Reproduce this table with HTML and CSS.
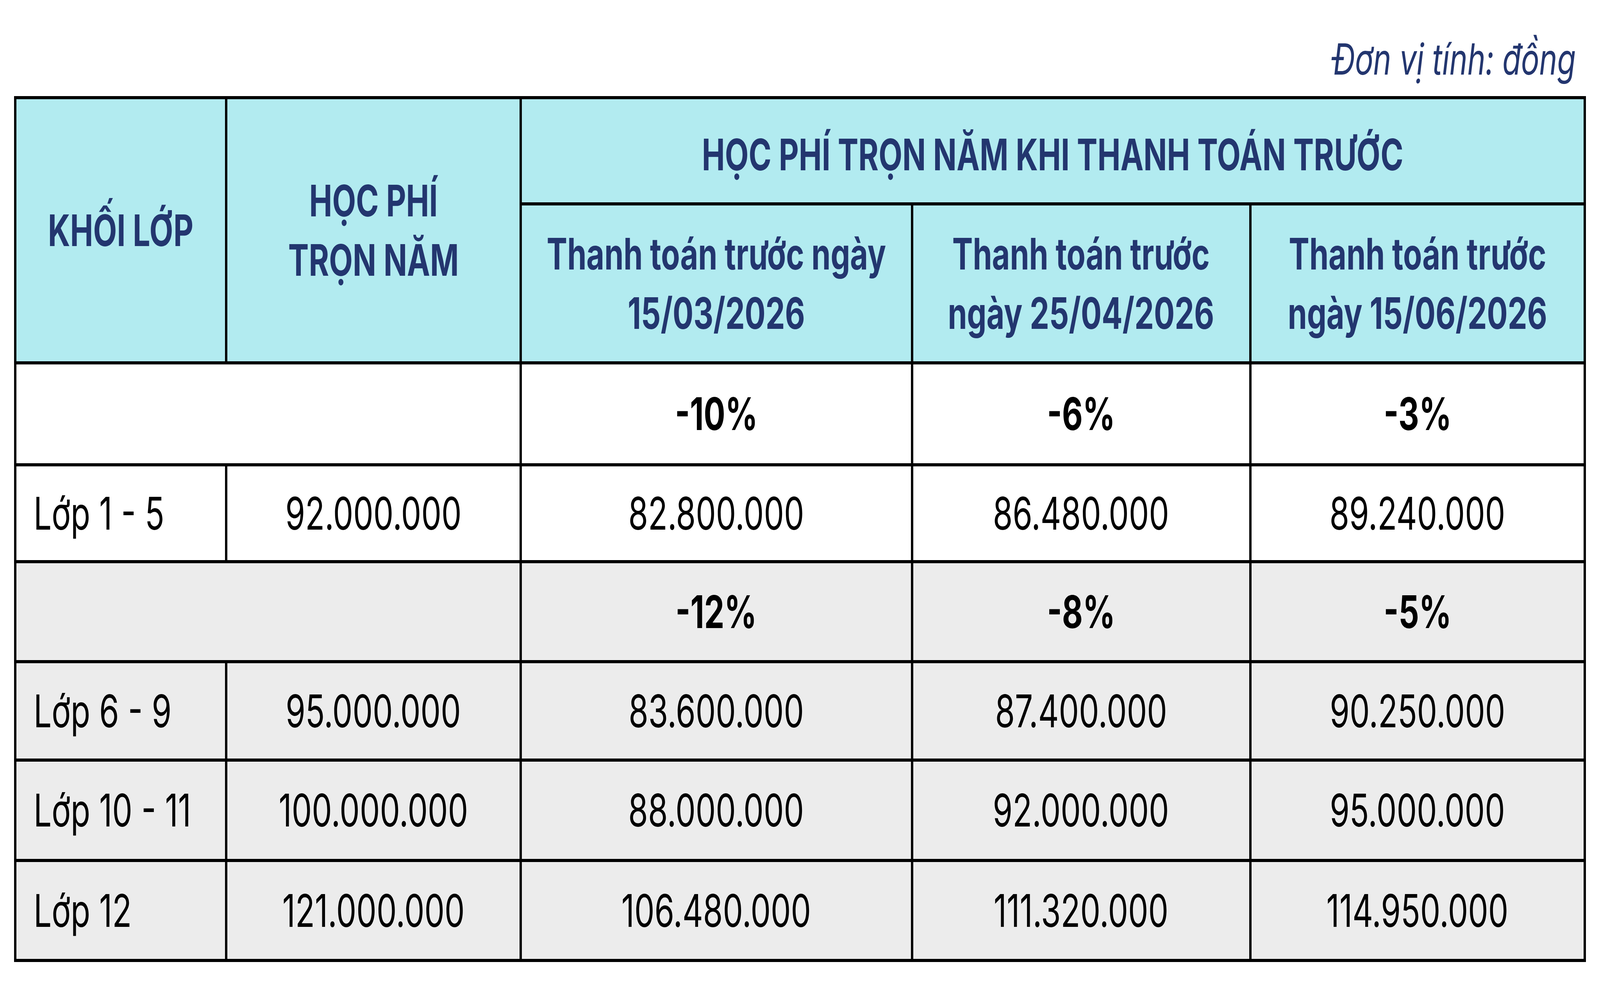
FILE: index.html
```html
<!DOCTYPE html>
<html lang="vi">
<head>
<meta charset="utf-8">
<title>Học phí</title>
<link rel="stylesheet" href="styles.css">
</head>
<body>
<div class="page">
  <div class="unit"><span class="txt">Đơn vị tính: đồng</span></div>
  <div class="fee-table">
    <div class="cell head head-tall"><span class="txt">KHỐI LỚP</span></div>
    <div class="cell head head-tall"><span class="txt">HỌC PHÍ<br>TRỌN NĂM</span></div>
    <div class="cell head head-wide"><span class="txt">HỌC PHÍ TRỌN NĂM KHI THANH TOÁN TRƯỚC</span></div>
    <div class="cell head"><span class="txt">Thanh toán trước ngày<br>15/03/2026</span></div>
    <div class="cell head"><span class="txt">Thanh toán trước<br>ngày 25/04/2026</span></div>
    <div class="cell head"><span class="txt">Thanh toán trước<br>ngày 15/06/2026</span></div>

    <div class="cell blank"></div>
    <div class="cell pct"><span class="txt">-10%</span></div>
    <div class="cell pct"><span class="txt">-6%</span></div>
    <div class="cell pct"><span class="txt">-3%</span></div>

    <div class="cell label"><span class="txt">Lớp 1 - 5</span></div>
    <div class="cell num"><span class="txt">92.000.000</span></div>
    <div class="cell num"><span class="txt">82.800.000</span></div>
    <div class="cell num"><span class="txt">86.480.000</span></div>
    <div class="cell num"><span class="txt">89.240.000</span></div>

    <div class="cell blank gray"></div>
    <div class="cell pct gray"><span class="txt">-12%</span></div>
    <div class="cell pct gray"><span class="txt">-8%</span></div>
    <div class="cell pct gray"><span class="txt">-5%</span></div>

    <div class="cell label gray"><span class="txt">Lớp 6 - 9</span></div>
    <div class="cell num gray"><span class="txt">95.000.000</span></div>
    <div class="cell num gray"><span class="txt">83.600.000</span></div>
    <div class="cell num gray"><span class="txt">87.400.000</span></div>
    <div class="cell num gray"><span class="txt">90.250.000</span></div>

    <div class="cell label gray"><span class="txt">Lớp 10 - 11</span></div>
    <div class="cell num gray"><span class="txt">100.000.000</span></div>
    <div class="cell num gray"><span class="txt">88.000.000</span></div>
    <div class="cell num gray"><span class="txt">92.000.000</span></div>
    <div class="cell num gray"><span class="txt">95.000.000</span></div>

    <div class="cell label gray"><span class="txt">Lớp 12</span></div>
    <div class="cell num gray"><span class="txt">121.000.000</span></div>
    <div class="cell num gray"><span class="txt">106.480.000</span></div>
    <div class="cell num gray"><span class="txt">111.320.000</span></div>
    <div class="cell num gray"><span class="txt">114.950.000</span></div>
  </div>
</div>
</body>
</html>
```
FILE: styles.css
```css
html, body {
  margin: 0;
  padding: 0;
  background: #ffffff;
}

body {
  font-family: Inter, "Noto Sans", sans-serif;
  color: #000000;
}

.page {
  width: 98.23vw;
  margin-left: 0.885vw;
  padding-top: 76px;
}

.txt {
  display: inline-block;
  transform: scaleX(0.7111);
  transform-origin: center center;
  white-space: nowrap;
}

.unit {
  font-style: italic;
  font-size: 110px;
  line-height: 150px;
  color: #23366f;
  text-align: right;
  padding-right: 0.625vw;
  margin-bottom: 20px;
}

.unit .txt {
  transform-origin: right center;
  letter-spacing: -0.5px;
}

.fee-table {
  display: grid;
  grid-template-columns: 751fr 1052fr 1401fr 1210fr 1196fr;
  grid-template-rows: 264px 399px 253px 240px 248px 244px 249px 248px;
  gap: 8px 6px;
  padding: 8px 6px;
  background: #000000;
}

.cell {
  display: flex;
  align-items: center;
  justify-content: center;
  text-align: center;
  background: #ffffff;
  min-width: 0;
}

.head {
  background: #b2ebf0;
  color: #23366f;
  font-weight: 700;
  font-size: 111px;
  line-height: 152px;
}

.head-tall {
  grid-row: span 2;
}

.head-wide {
  grid-column: span 3;
  padding-top: 20px;
}

.blank {
  grid-column: span 2;
}

.pct {
  font-weight: 700;
  font-size: 115px;
}

.num {
  font-size: 115px;
}

.label {
  justify-content: flex-start;
  padding-left: 44px;
  font-size: 115px;
}

.label .txt {
  transform-origin: left center;
}

.gray {
  background: #ececec;
}
```
